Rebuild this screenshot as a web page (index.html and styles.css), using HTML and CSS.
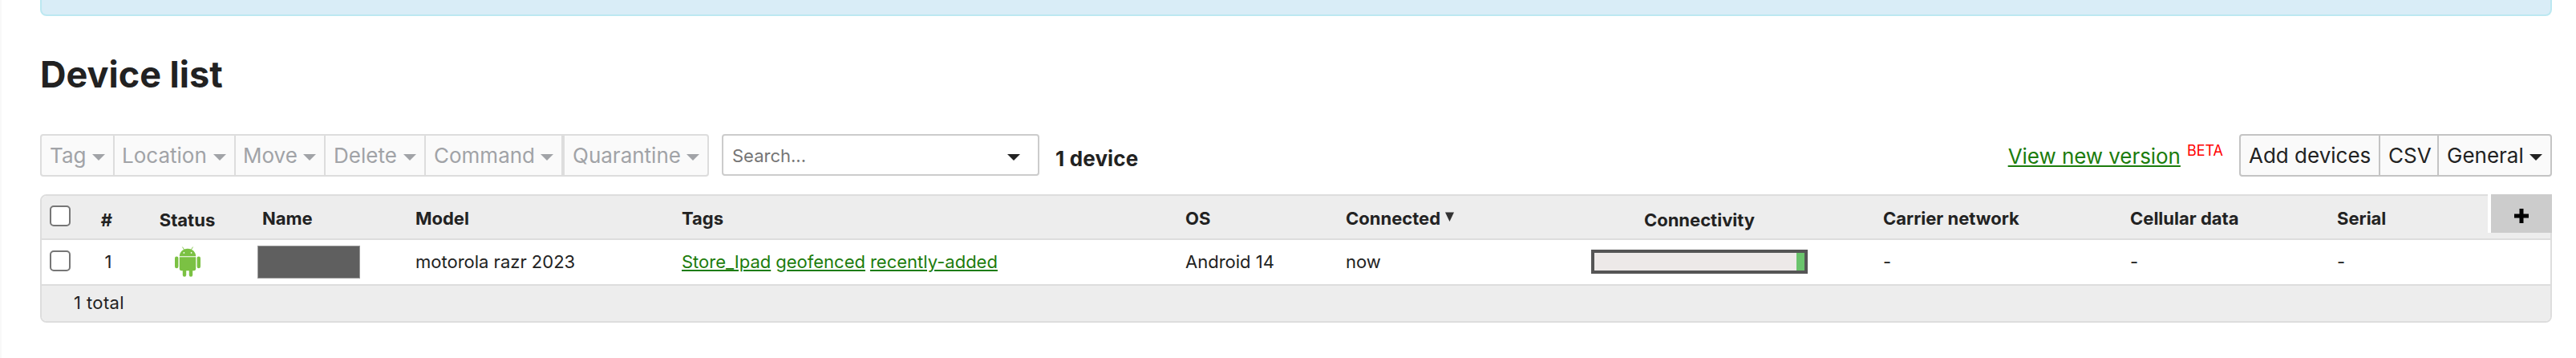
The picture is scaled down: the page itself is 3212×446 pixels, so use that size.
FILE: index.html
```html
<!DOCTYPE html>
<html lang="en">
<head>
<meta charset="utf-8">
<title>Device list</title>
<link rel="stylesheet" href="styles.css">
</head>
<body>
<main class="page">
  <div class="notice"></div>
  <h1 class="title">Device list</h1>
  <div class="toolbar">
    <div class="group disabled">
      <button class="btn tag" disabled>Tag<i class="caret"></i></button>
      <button class="btn location" disabled>Location<i class="caret"></i></button>
      <button class="btn move" disabled>Move<i class="caret"></i></button>
      <button class="btn delete" disabled>Delete<i class="caret"></i></button>
      <button class="btn command" disabled>Command<i class="caret"></i></button>
      <button class="btn quarantine" disabled>Quarantine<i class="caret"></i></button>
    </div>
    <div class="search"><span>Search...</span><i class="caret"></i></div>
    <strong class="count">1 device</strong>
    <div class="version"><a class="link" href="#">View new version</a><span class="beta">BETA</span></div>
    <div class="group">
      <button class="btn add">Add devices</button>
      <button class="btn csv">CSV</button>
      <button class="btn general">General<i class="caret"></i></button>
    </div>
  </div>
  <div class="table">
    <div class="row head">
      <div class="check"><span class="box"></span></div>
      <div class="center low">#</div>
      <div class="center low status">Status</div>
      <div class="name">Name</div>
      <div>Model</div>
      <div>Tags</div>
      <div>OS</div>
      <div>Connected<svg class="sort" viewBox="0 0 11 12"><path d="M0 0.5H11L5.5 12Z" fill="#333"/></svg></div>
      <div class="center low connectivity">Connectivity</div>
      <div>Carrier network</div>
      <div>Cellular data</div>
      <div>Serial</div>
      <button class="plus" aria-label="Add column"><svg width="18" height="18" viewBox="0 0 18 18"><path d="M6.5 0h5v6.5H18v5h-6.5V18h-5v-6.5H0v-5h6.5z"/></svg></button>
    </div>
    <div class="row body">
      <div class="check"><span class="box"></span></div>
      <div class="center number">1</div>
      <div class="center status">
        <svg class="android" viewBox="0 0 32 38" fill="#7bc143">
          <path d="M5.8 12.2C6 7.2 10 2.8 16 2.8S26 7.2 26.2 12.2Z"/>
          <path d="M9.7 1l2.6 4.2M22.3 1l-2.6 4.2" stroke="#7bc143" stroke-width=".9" stroke-linecap="round"/>
          <path d="M5.8 13.2H26.2V27.6a2.6 2.6 0 0 1-2.6 2.6H8.4a2.6 2.6 0 0 1-2.6-2.6Z"/>
          <rect x="0" y="12.4" width="4.4" height="14.8" rx="2.2"/>
          <rect x="27.6" y="12.4" width="4.4" height="14.8" rx="2.2"/>
          <rect x="9.8" y="27" width="4.4" height="10.8" rx="2.2"/>
          <rect x="17.8" y="27" width="4.4" height="10.8" rx="2.2"/>
          <circle cx="11.4" cy="7.9" r=".9" fill="#fff"/>
          <circle cx="20.6" cy="7.9" r=".9" fill="#fff"/>
        </svg>
      </div>
      <div><span class="redacted"></span></div>
      <div>motorola razr 2023</div>
      <div class="tags"><a class="link" href="#">Store_Ipad</a><a class="link" href="#">geofenced</a><a class="link" href="#">recently-added</a></div>
      <div>Android 14</div>
      <div>now</div>
      <div class="center connectivity"><span class="meter"><span class="online"></span></span></div>
      <div>-</div>
      <div>-</div>
      <div>-</div>
    </div>
    <div class="foot">1 total</div>
  </div>
</main>
</body>
</html>
```
FILE: styles.css
```css
* { box-sizing: border-box; }
body {
  margin: 0;
  height: 446px;
  overflow: hidden;
  border-left: 2px solid #f8f8f8;
  background: #fff;
  color: #222;
  font: 22px/26px Inter, "Liberation Sans", sans-serif;
}
.page { padding: 0 30px 0 48px; }
.notice {
  height: 20px;
  border: 2px solid #bce8f1;
  border-top: 0;
  border-radius: 0 0 8px 8px;
  background: #d9edf7;
}
.title {
  margin: 46px 0 0;
  height: 101px;
  font-size: 45px;
  line-height: 54px;
  font-weight: 700;
}
.toolbar { display: flex; align-items: flex-start; height: 75px; font-size: 26px; }
.group {
  display: flex;
  height: 53px;
  border: 2px solid #c4c4c4;
  border-radius: 4px;
  background: #fafafa;
}
.btn {
  display: flex;
  align-items: center;
  justify-content: space-between;
  height: 49px;
  padding: 1px 10px 0;
  border: 0;
  border-left: 2px solid #c4c4c4;
  background: none;
  color: #222;
  font: inherit;
  line-height: 32px;
  white-space: nowrap;
}
.btn:first-child { border-left: 0; }
.disabled, .disabled .btn { border-color: #ddd; color: #a1a3a7; }
.caret {
  width: 16px;
  margin-top: 4px;
  border: 8px solid transparent;
  border-top-color: currentColor;
  border-bottom: 0;
}
.tag { width: 89px; }
.location { width: 151px; padding-left: 9px; }
.move { width: 112px; padding-left: 9px; }
.delete { width: 125px; }
.command { width: 171px; }
.quarantine { width: 182px; border-left-width: 4px; }
.add { width: 172px; }
.csv { width: 73px; }
.general { width: 141px; }
.search {
  display: flex;
  align-items: center;
  justify-content: space-between;
  width: 396px;
  height: 52px;
  margin-left: 16px;
  padding: 2px 22px 0 11px;
  border: 2px solid #ccc;
  border-radius: 4px;
  font-size: 22px;
}
.search span { color: #757575; }
.count { margin: 15px 0 0 20px; line-height: 32px; letter-spacing: .15px; }
.link { color: #1c7c0c; text-decoration: underline; text-decoration-thickness: 2px; text-underline-offset: 2px; }
.version { display: flex; margin: 12px 20px 0 auto; line-height: 32px; }
.version .link { letter-spacing: -.06px; margin-right: 1px; }
.beta { margin: -7px 0 0 7px; color: #f00; font-size: 18px; }
.table {
  height: 160px;
  border: 2px solid #ddd;
  border-radius: 8px;
}
.row {
  position: relative;
  display: grid;
  grid-template-columns: 50px 62px 157px 197px 332px 628px 200px 270px 400px 308px 258px 1fr;
  align-items: center;
  height: 57px;
  border-bottom: 2px solid #ddd;
  line-height: 26px;
}
.row > div:nth-child(n+4) { white-space: nowrap; }
.head { height: 55px; padding-top: 3px; border-radius: 6px 6px 0 0; background: #ededed; font-weight: 700; }
.body { padding-bottom: 1px; }
.center { display: flex; justify-content: center; }
.number { padding-left: 4px; }
.status { padding-right: 18px; }
.connectivity { padding-right: 58px; }
.head > .low { padding-top: 4px; }
.check { padding-left: 10px; }
.box { display: block; width: 26px; height: 26px; margin-top: -2px; border: 2px solid #767676; border-radius: 5px; background: #fff; }
.head .box { margin-top: -6px; }
.name { padding-left: 6px; }
.sort { width: 11px; height: 12px; margin-left: 6px; vertical-align: 4px; }
.android { width: 32px; height: 38px; }
.redacted { display: block; width: 128px; height: 41px; margin-top: 1px; border: 1px solid #999; background: #5f5f5f; }
.tags { display: flex; gap: 6px; }
.meter {
  display: flex;
  justify-content: flex-end;
  width: 270px;
  height: 30px;
  border: 4px solid #555;
  background: #ede9e8;
}
.online { width: 10px; background: #6ac46c; }
.plus {
  position: absolute;
  top: -2px;
  right: -2px;
  width: 80px;
  height: 48px;
  padding: 5px 0 0;
  border: 0;
  border-left: 4px solid #fff;
  background: #ccc;
  line-height: 0;
}
.foot { height: 44px; padding: 8px 0 0 40px; border-radius: 0 0 6px 6px; background: #ededed; letter-spacing: .4px; }
```
